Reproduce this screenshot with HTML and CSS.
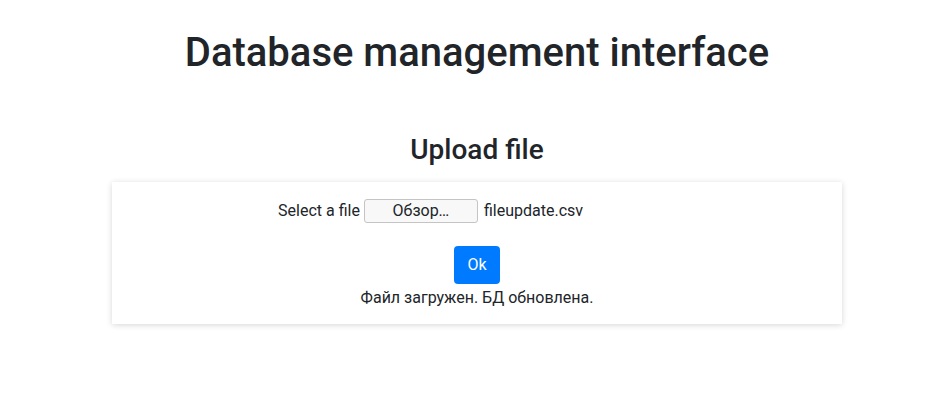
FILE: index.html
```html
<!DOCTYPE html>
<html>
<head>
<meta charset="utf-8">
<link rel="stylesheet" href="styles.css">
</head>
<body>
<div class="page">
  <h1 class="title">Database management interface</h1>
  <section class="upload">
    <h3 class="subtitle">Upload file</h3>
    <div class="card">
      <div class="file-row">
        <span class="label">Select a file</span>
        <span class="file-input"><span class="browse">Обзор…</span><span class="fname">fileupdate.csv</span></span>
      </div>
      <button class="btn">Ok</button>
      <p class="status">Файл загружен. БД обновлена.</p>
    </div>
  </section>
</div>
</body>
</html>
```
FILE: styles.css
```css
* { box-sizing: border-box; }
html, body { min-height: 100%; }
body {
  margin: 0;
  font-family: Roboto, "Noto Sans", sans-serif;
  font-size: 16px;
  line-height: 1.5;
  color: #212529;
  background: #fff;
}
.page {
  padding: 0 0 40px 25px;
  text-align: center;
}
.title {
  margin: 0;
  padding-top: 29px;
  font-size: 40px;
  font-weight: 500;
  line-height: 1.2;
}
.upload {
  margin-top: 56px;
  display: flex;
  flex-direction: column;
  align-items: center;
}
.subtitle {
  margin: 0 0 15px;
  font-size: 28px;
  font-weight: 500;
  line-height: 1.2;
}
.card {
  width: 730px;
  background: #fff;
  box-shadow: 0 1px 6px rgba(0,0,0,0.16);
  padding: 16px 0 14px;
  display: flex;
  flex-direction: column;
  align-items: center;
}
.file-row {
  display: flex;
  align-items: center;
  gap: 4px;
  height: 26px;
}
.file-input {
  display: flex;
  align-items: center;
  width: 312px;
  text-align: left;
}
.browse {
  width: 114px;
  height: 24px;
  border: 1px solid #c4c4c4;
  border-radius: 3px;
  background: #f8f8f8;
  display: flex;
  align-items: center;
  justify-content: center;
  font-size: 16px;
  line-height: 1;
}
.fname { margin-left: 6px; }
.btn {
  margin-top: 22px;
  width: 46px;
  height: 38px;
  border: none;
  border-radius: 4px;
  background: #007bff;
  color: #fff;
  font-family: inherit;
  font-size: 16px;
}
.status {
  margin: 2px 0 0;
}
```
